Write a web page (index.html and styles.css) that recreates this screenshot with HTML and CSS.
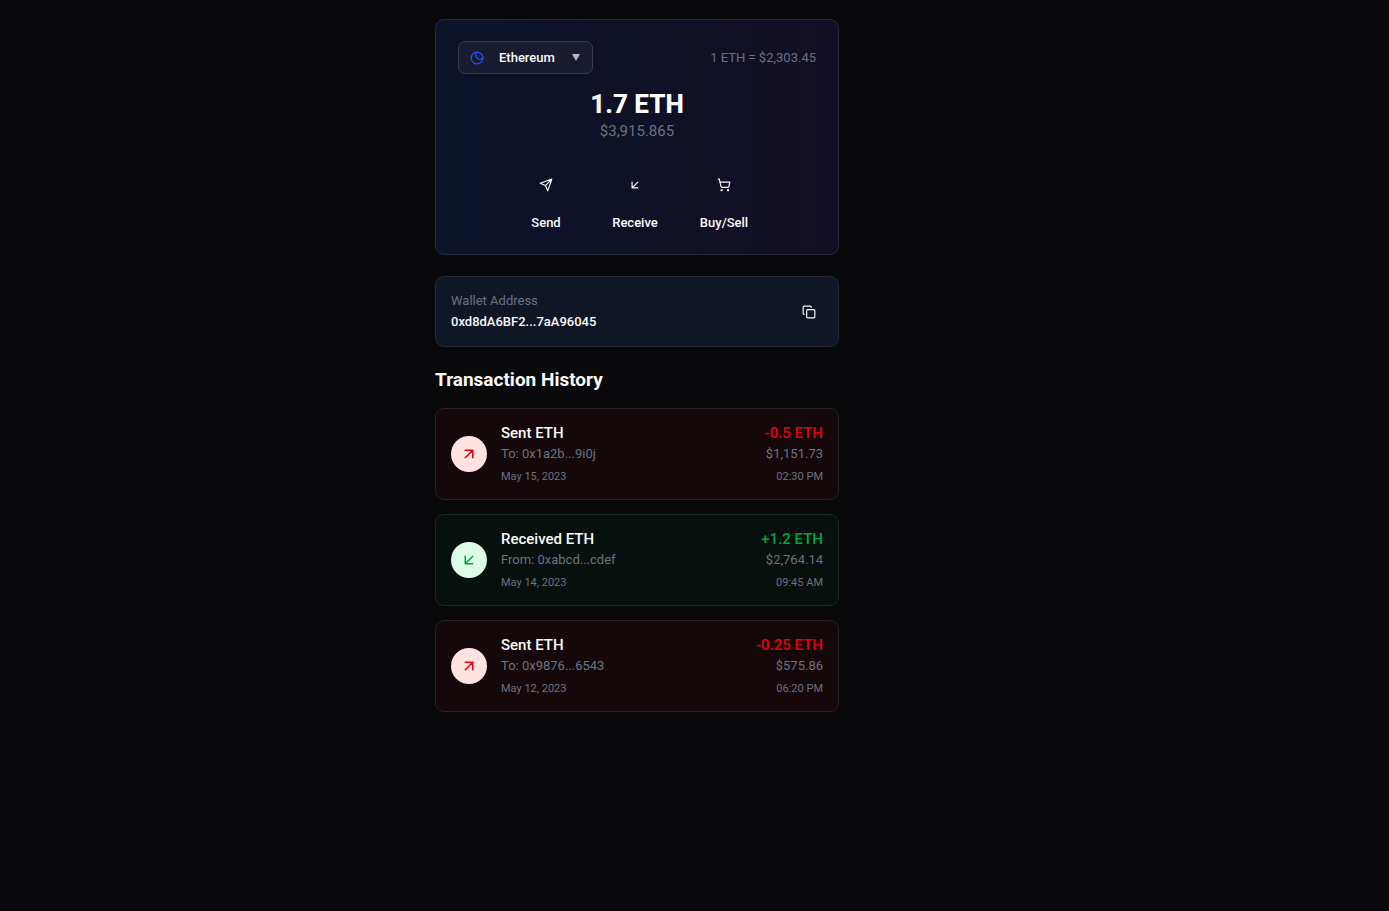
FILE: index.html
```
<!DOCTYPE html>
<html lang="en">
<head>
<meta charset="utf-8">
<meta name="viewport" content="width=device-width, initial-scale=1">
<title>Wallet</title>
<link rel="stylesheet" href="styles.css">
</head>
<body>
<svg class="sprite" aria-hidden="true">
  <symbol id="up-right" viewBox="0 0 24 24"><path d="M7 7h10v10M7 17 17 7"/></symbol>
  <symbol id="down-left" viewBox="0 0 24 24"><path d="M17 7 7 17M17 17H7V7"/></symbol>
</svg>
<main class="page">
  <div class="wallet">
    <section class="card balance">
      <div class="balance-top">
        <label class="coin">
          <svg class="icon coin-icon" viewBox="0 0 24 24" aria-hidden="true"><circle cx="12" cy="12" r="10"/><path d="M12 2a7 7 0 1 0 10 10"/></svg>
          <select class="coin-select" aria-label="Currency"><option>Ethereum</option></select>
          <svg class="coin-arrow" viewBox="0 0 8 7" aria-hidden="true"><path d="M0 0h8L4 7z"/></svg>
        </label>
        <span class="rate">1 ETH = $2,303.45</span>
      </div>
      <h1 class="amount">1.7 ETH</h1>
      <p class="fiat">$3,915.865</p>
      <div class="actions">
        <button class="action" type="button"><span class="action-icon"><svg class="icon" viewBox="0 0 24 24"><path d="m22 2-7 20-4-9-9-4zM22 2 11 13"/></svg></span>Send</button>
        <button class="action" type="button"><span class="action-icon"><svg class="icon"><use href="#down-left"/></svg></span>Receive</button>
        <button class="action" type="button"><span class="action-icon"><svg class="icon" viewBox="0 0 24 24"><circle cx="8" cy="21" r="1"/><circle cx="19" cy="21" r="1"/><path d="M2 2h2l2.700 12.400a2 2 0 0 0 2 1.600h9.700a2 2 0 0 0 2-1.600L22 7H5"/></svg></span>Buy/Sell</button>
      </div>
    </section>
    <section class="card address">
      <div class="address-text">
        <span class="muted">Wallet Address</span>
        <span class="address-value">0xd8dA6BF2...7aA96045</span>
      </div>
      <button class="copy" type="button" aria-label="Copy address"><svg class="icon" viewBox="0 0 24 24"><rect x="8" y="8" width="14" height="14" rx="2"/><path d="M4 16a2 2 0 0 1-2-2V4c0-1.100.9-2 2-2h10a2 2 0 0 1 2 2"/></svg></button>
    </section>
    <h2 class="heading">Transaction History</h2>
    <ul class="list">
      <li class="card tx sent">
        <span class="badge"><svg class="icon"><use href="#up-right"/></svg></span>
        <div class="tx-info"><span class="tx-title">Sent ETH</span><span class="muted">To: 0x1a2b...9i0j</span><span class="small">May 15, 2023</span></div>
        <div class="tx-info tx-end"><span class="tx-amount">-0.5 ETH</span><span class="muted">$1,151.73</span><span class="small">02:30 PM</span></div>
      </li>
      <li class="card tx received">
        <span class="badge"><svg class="icon"><use href="#down-left"/></svg></span>
        <div class="tx-info"><span class="tx-title">Received ETH</span><span class="muted">From: 0xabcd...cdef</span><span class="small">May 14, 2023</span></div>
        <div class="tx-info tx-end"><span class="tx-amount">+1.2 ETH</span><span class="muted">$2,764.14</span><span class="small">09:45 AM</span></div>
      </li>
      <li class="card tx sent">
        <span class="badge"><svg class="icon"><use href="#up-right"/></svg></span>
        <div class="tx-info"><span class="tx-title">Sent ETH</span><span class="muted">To: 0x9876...6543</span><span class="small">May 12, 2023</span></div>
        <div class="tx-info tx-end"><span class="tx-amount">-0.25 ETH</span><span class="muted">$575.86</span><span class="small">06:20 PM</span></div>
      </li>
    </ul>
  </div>
</main>
</body>
</html>
```
FILE: styles.css
```
* { box-sizing: border-box; }
body, h1, h2, p, ul { margin: 0; padding: 0; }
body {
  background: #09090b;
  color: #fafafa;
  font-family: Roboto, "Liberation Sans", sans-serif;
  font-size: 13px;
  line-height: 20px;
}
button, select { font: inherit; color: inherit; background: none; border: 0; padding: 0; cursor: pointer; }
.sprite { display: none; }
.page { display: flex; justify-content: center; padding: 19px 115px 19px 0; }
.wallet { width: 100%; max-width: 404px; }
.card { border: 1px solid #26272b; border-radius: 9px; }
.icon { width: 14px; height: 14px; fill: none; stroke: currentColor; stroke-width: 2; stroke-linecap: round; stroke-linejoin: round; display: block; }
.muted { color: #6a7282; }

.balance { padding: 21px 22px; border-color: #26293a; background: linear-gradient(to right, #0c132a, #0f1126 50%, #130e24); text-align: center; }
.balance-top { display: flex; justify-content: space-between; align-items: center; }
.coin { display: flex; align-items: center; height: 33px; width: 135px; padding: 0 12px 0 11px; border: 1px solid #393b4c; border-radius: 7px; background: #191c30; }
.coin-icon { color: #155dfc; }
.coin-select { appearance: none; flex: 1; margin-left: 15px; min-width: 0; font-weight: 500; outline: none; }
.coin-select option { background: #191c30; }
.coin-arrow { width: 8px; height: 7px; fill: #b6b7bf; }
.rate { color: #6a7282; }
.amount { margin-top: 14px; font-size: 26px; line-height: 32px; font-weight: 800; }
.fiat { font-size: 15px; line-height: 22px; color: #6a7282; }
.actions { display: grid; grid-template-columns: repeat(3, 89px); justify-content: center; margin-top: 25px; padding-right: 4px; }
.action { display: flex; flex-direction: column; align-items: center; gap: 11px; font-weight: 500; }
.action-icon { display: grid; place-items: center; width: 35px; height: 35px; }

.address { display: flex; justify-content: space-between; align-items: center; margin-top: 21px; padding: 14px 15px; background: #101625; border-color: #242936; }
.address-text { display: flex; flex-direction: column; gap: 1px; }
.address-value { font-weight: 500; }
.copy { display: grid; place-items: center; width: 28px; height: 28px; }

.heading { margin: 21px 0 16px; font-size: 19px; line-height: 24px; font-weight: 700; }
.list { display: grid; gap: 14px; list-style: none; }
.tx { display: flex; align-items: center; gap: 14px; padding: 14px 15px; }
.sent { background: #15080a; border-color: #2b2022; }
.received { background: #07100d; border-color: #1e2624; }
.badge { display: grid; place-items: center; width: 36px; height: 36px; border-radius: 50%; }
.badge .icon { width: 18px; height: 18px; }
.sent .badge { background: #ffe2e2; color: #e7000b; }
.received .badge { background: #dcfce7; color: #00a63e; }
.tx-info { display: flex; flex-direction: column; }
.tx-end { margin-left: auto; text-align: right; }
.tx-title, .tx-amount { font-size: 15px; line-height: 21px; font-weight: 500; }
.sent .tx-amount { color: #e7000b; }
.received .tx-amount { color: #00a63e; }
.small { margin-top: 5px; font-size: 11px; line-height: 16px; color: #6a7282; }
```
